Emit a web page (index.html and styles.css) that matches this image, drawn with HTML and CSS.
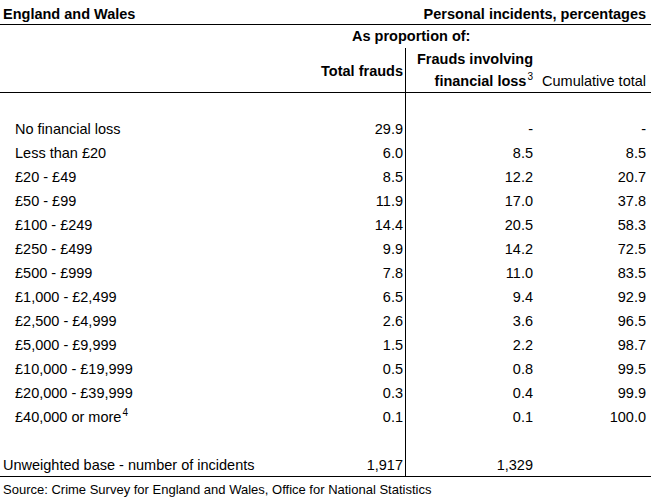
FILE: index.html
```html
<!DOCTYPE html>
<html lang="en">
<head>
    <meta charset="UTF-8">
    <meta name="viewport" content="width=device-width, initial-scale=1.0">
    <title>Fraud incidents by financial loss</title>
    <link rel="stylesheet" href="styles.css">
</head>
<body>

<table class="stats">
    <colgroup>
        <col class="col-label">
        <col class="col-total">
        <col class="col-loss">
        <col class="col-cum">
    </colgroup>
    <thead>
        <tr class="title-row">
            <th class="bold">England and Wales</th>
            <th colspan="3" class="bold num cum">Personal incidents, percentages</th>
        </tr>
        <tr class="prop-row">
            <th></th>
            <th colspan="3" class="bold prop">As proportion of:</th>
        </tr>
        <tr class="head-row">
            <th></th>
            <th rowspan="2" class="bold num divider total-head">Total frauds</th>
            <th class="bold num">Frauds involving</th>
            <th></th>
        </tr>
        <tr class="head-row last">
            <th></th>
            <th class="bold num">financial loss<sup>3</sup></th>
            <th class="num cum">Cumulative total</th>
        </tr>
    </thead>
    <tbody>
        <tr class="gap-row first"><td></td><td class="divider"></td><td></td><td></td></tr>
        <tr><td class="band">No financial loss</td><td class="num divider">29.9</td><td class="num">-</td><td class="num cum">-</td></tr>
        <tr><td class="band">Less than £20</td><td class="num divider">6.0</td><td class="num">8.5</td><td class="num cum">8.5</td></tr>
        <tr><td class="band">£20 - £49</td><td class="num divider">8.5</td><td class="num">12.2</td><td class="num cum">20.7</td></tr>
        <tr><td class="band">£50 - £99</td><td class="num divider">11.9</td><td class="num">17.0</td><td class="num cum">37.8</td></tr>
        <tr><td class="band">£100 - £249</td><td class="num divider">14.4</td><td class="num">20.5</td><td class="num cum">58.3</td></tr>
        <tr><td class="band">£250 - £499</td><td class="num divider">9.9</td><td class="num">14.2</td><td class="num cum">72.5</td></tr>
        <tr><td class="band">£500 - £999</td><td class="num divider">7.8</td><td class="num">11.0</td><td class="num cum">83.5</td></tr>
        <tr><td class="band">£1,000 - £2,499</td><td class="num divider">6.5</td><td class="num">9.4</td><td class="num cum">92.9</td></tr>
        <tr><td class="band">£2,500 - £4,999</td><td class="num divider">2.6</td><td class="num">3.6</td><td class="num cum">96.5</td></tr>
        <tr><td class="band">£5,000 - £9,999</td><td class="num divider">1.5</td><td class="num">2.2</td><td class="num cum">98.7</td></tr>
        <tr><td class="band">£10,000 - £19,999</td><td class="num divider">0.5</td><td class="num">0.8</td><td class="num cum">99.5</td></tr>
        <tr><td class="band">£20,000 - £39,999</td><td class="num divider">0.3</td><td class="num">0.4</td><td class="num cum">99.9</td></tr>
        <tr><td class="band">£40,000 or more<sup>4</sup></td><td class="num divider">0.1</td><td class="num">0.1</td><td class="num cum">100.0</td></tr>
        <tr class="gap-row"><td></td><td class="divider"></td><td></td><td></td></tr>
        <tr class="base-row">
            <td>Unweighted base - number of incidents</td>
            <td class="num divider">1,917</td>
            <td class="num">1,329</td>
            <td></td>
        </tr>
    </tbody>
    <tfoot>
        <tr class="source-row">
            <td colspan="4">Source: Crime Survey for England and Wales, Office for National Statistics</td>
        </tr>
    </tfoot>
</table>

</body>
</html>
```

FILE: styles.css
```css
/* --- Page --- */
body {
    margin: 0;
    background-color: #ffffff;
    color: #000000;
    font-family: "Liberation Sans", Arial, sans-serif;
    font-size: 14.5px;
}

/* --- Table frame --- */
.stats {
    width: 651px;
    table-layout: fixed;
    border-collapse: separate;
    border-spacing: 0;
}

.col-label { width: 315px; }
.col-total { width: 91px; }
.col-loss  { width: 129px; }
.col-cum   { width: 116px; }

.stats th,
.stats td {
    padding: 0 2px 3px 3px;
    line-height: 16px;
    vertical-align: bottom;
    text-align: left;
    font-weight: normal;
    white-space: nowrap;
}

.stats .bold { font-weight: bold; }
.stats .num { text-align: right; }
.stats .cum { padding-right: 5px; }

/* the rule between total frauds and the other columns */
.stats .divider { border-right: 1px solid #000; }

.stats sup {
    font-size: 10px;
    line-height: 0;
    vertical-align: 6px;
    margin-left: 1px;
}

.stats th sup { font-weight: normal; }

/* --- Header rows --- */
.title-row { height: 25px; }
.title-row th {
    padding-bottom: 2px;
    border-bottom: 1px solid #000;
}

.prop-row { height: 23px; }
.prop-row th { padding-bottom: 4px; }
.stats .prop { padding-left: 37px; }

.head-row { height: 22px; }
.head-row.last { height: 23px; }
.head-row.last th,
.stats .total-head { border-bottom: 1px solid #000; }

.stats .total-head {
    vertical-align: middle;
    padding-top: 2px;
    padding-bottom: 0;
}

/* --- Body rows --- */
.gap-row.first { height: 23px; }
.stats tbody tr { height: 24px; }
.stats .band { padding-left: 15px; }

.stats tbody tr.base-row { height: 25px; }
.base-row td { border-bottom: 1px solid #000; }

/* --- Footer --- */
.source-row { height: 23px; }
.source-row td {
    padding-bottom: 2px;
    font-size: 13px;
}
```
